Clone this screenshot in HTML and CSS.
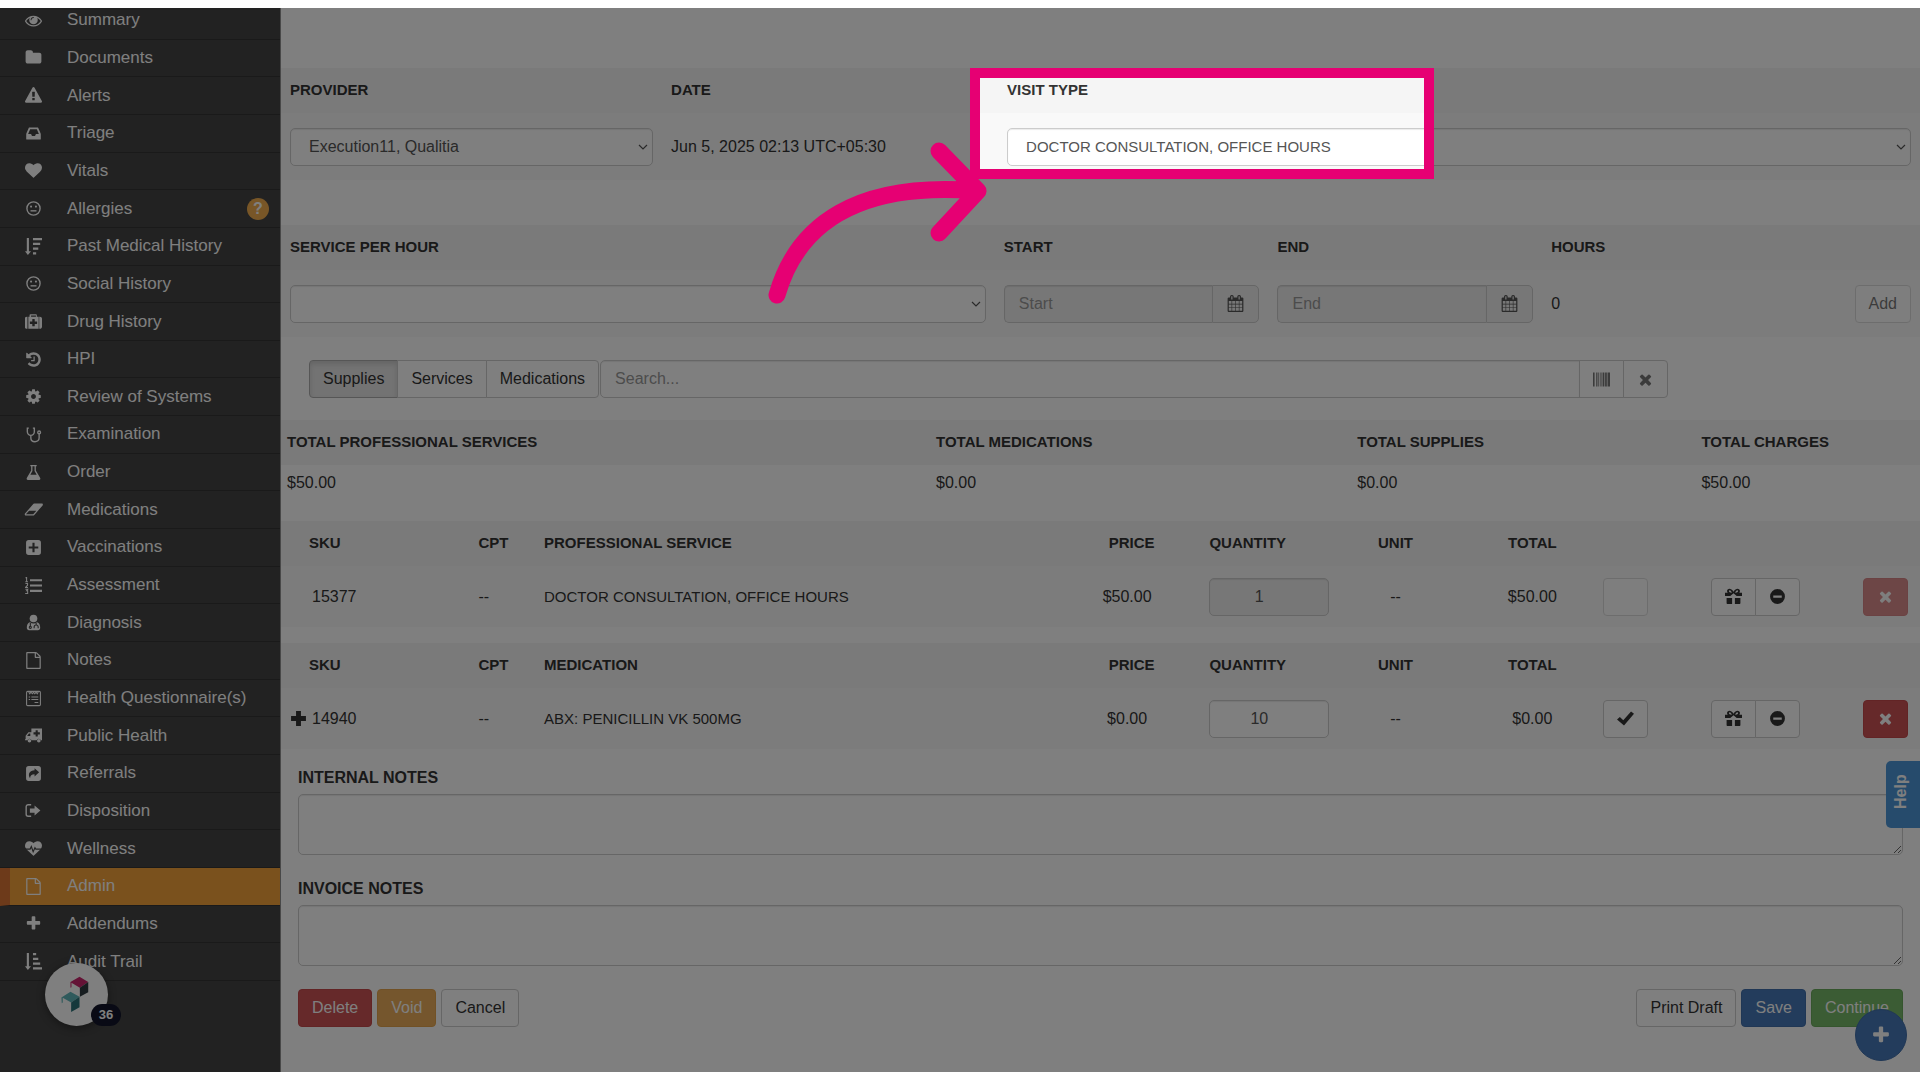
FILE: index.html
```html
<!DOCTYPE html>
<html lang="en">
<head>
	<meta charset="UTF-8">
	<title>Admin</title>
	<link rel="stylesheet" href="styles.css">
</head>
<body>
	<div class="app">
		<nav class="sidebar">
			<ul class="menu">
				<li><a href="#"><svg class="icon" viewBox="0 0 1792 1792"><path d="M1664 960q-152-236-381-353 61 104 61 225 0 185-131.500 316.500t-316.500 131.500-316.500-131.500-131.500-316.500q0-121 61-225-229 117-381 353 133 205 333.500 326.500t434.500 121.500 434.500-121.500 333.500-326.500zm-720-384q0-20-14-34t-34-14q-125 0-214.500 89.500t-89.500 214.500q0 20 14 34t34 14 34-14 14-34q0-86 61-147t147-61q20 0 34-14t14-34zm848 384q0 34-20 69-140 230-376.500 368.500t-499.500 138.500-499.500-139-376.500-368q-20-35-20-69t20-69q140-229 376.500-368t499.500-139 499.500 139 376.500 368q20 35 20 69z"/></svg>Summary</a></li>
				<li><a href="#"><svg class="icon" viewBox="0 0 1792 1792"><path d="M1728 608v704q0 92-66 158t-158 66h-1216q-92 0-158-66t-66-158v-960q0-92 66-158t158-66h320q92 0 158 66t66 158v32h672q92 0 158 66t66 158z"/></svg>Documents</a></li>
				<li><a href="#"><svg class="icon" viewBox="0 0 1792 1792"><path d="M1024 1375v-190q0-14-9.500-23.500t-22.500-9.500h-192q-13 0-22.500 9.500t-9.500 23.500v190q0 14 9.500 23.500t22.500 9.500h192q13 0 22.500-9.500t9.500-23.500zm-2-374l18-459q0-12-10-19-13-11-24-11h-220q-11 0-24 11-10 7-10 21l17 457q0 10 10 16.500t24 6.500h185q14 0 23.500-6.500t10.500-16.500zm-14-934l768 1408q35 63-2 126-17 29-46.500 46t-63.500 17h-1536q-34 0-63.500-17t-46.500-46q-37-63-2-126l768-1408q17-31 47-49t65-18 65 18 47 49z"/></svg>Alerts</a></li>
				<li><a href="#"><svg class="icon" viewBox="0 0 1792 1792"><path d="M1151 960h316q-1-3-2.500-8t-2.500-8l-212-496h-708l-212 496q-1 2-2.500 8t-2.500 8h316l95 192h320zm513 30v482q0 26-19 45t-45 19h-1408q-26 0-45-19t-19-45v-482q0-62 25-123l238-552q10-25 36.500-42t52.500-17h832q26 0 52.500 17t36.500 42l238 552q25 61 25 123z"/></svg>Triage</a></li>
				<li><a href="#"><svg class="icon" viewBox="0 0 1792 1792"><path d="M896 1664q-26 0-44-18l-624-602q-10-8-27.500-26t-55.500-65.500-68-97.500-53.500-121-23.500-138q0-220 127-344t351-124q62 0 126.500 21.500t120 58 95.500 68.500 76 68q36-36 76-68t95.500-68.500 120-58 126.500-21.500q224 0 351 124t127 344q0 221-229 450l-623 600q-18 18-44 18z"/></svg>Vitals</a></li>
				<li><a href="#"><svg class="icon" viewBox="0 0 16 16"><circle class="line" cx="8" cy="8" r="6.200"/><circle cx="5.700" cy="6.200" r="1"/><circle cx="10.300" cy="6.200" r="1"/><path class="line" d="M5.200 10.200h5.600"/></svg>Allergies<span class="badge">?</span></a></li>
				<li><a href="#"><svg class="icon" viewBox="0 0 16 16"><path d="M1.700 0h2v12.500h2L2.700 16 0 12.500h1.700zM7.500 0h8.500v2h-8.500zM7.500 4.500h6.800v2h-6.800zM7.500 9h5v2h-5zM7.500 13.500h3v2h-3z"/></svg>Past Medical History</a></li>
				<li><a href="#"><svg class="icon" viewBox="0 0 16 16"><circle class="line" cx="8" cy="8" r="6.200"/><circle cx="5.700" cy="6.200" r="1"/><circle cx="10.300" cy="6.200" r="1"/><path class="line" d="M5.200 10.200h5.600"/></svg>Social History</a></li>
				<li><a href="#"><svg class="icon" viewBox="0 0 1792 1792"><path d="M1280 1120v-192q0-14-9-23t-23-9h-224v-224q0-14-9-23t-23-9h-192q-14 0-23 9t-9 23v224h-224q-14 0-23 9t-9 23v192q0 14 9 23t23 9h224v224q0 14 9 23t23 9h192q14 0 23-9t9-23v-224h224q14 0 23-9t9-23zm-640-736h512v-128h-512v128zm-384 0v1280h-64q-92 0-158-66t-66-158v-832q0-92 66-158t158-66h64zm1184 0v1280h-1088v-1280h128v-160q0-40 28-68t68-28h576q40 0 68 28t28 68v160h128zm352 224v832q0 92-66 158t-158 66h-64v-1280h64q92 0 158 66t66 158z"/></svg>Drug History</a></li>
				<li><a href="#"><svg class="icon" viewBox="0 0 1792 1792"><path d="M1664 896q0 156-61 298t-164 245-245 164-298 61q-172 0-327-72.500t-264-204.500q-7-10-6.500-22.500t8.500-20.500l137-138q10-9 25-9 16 2 23 12 73 95 179 147t225 52q104 0 198.500-40.500t163.500-109.500 109.500-163.500 40.500-198.500-40.500-198.500-109.500-163.500-163.500-109.500-198.500-40.500q-98 0-188 35.500t-160 101.500l137 138q31 30 14 69-17 40-59 40h-448q-26 0-45-19t-19-45v-448q0-42 40-59 39-17 69 14l130 129q107-101 244.500-156.500t284.500-55.500q156 0 298 61t245 164 164 245 61 298zm-640-288v448q0 14-9 23t-23 9h-320q-14 0-23-9t-9-23v-64q0-14 9-23t23-9h224v-352q0-14 9-23t23-9h64q14 0 23 9t9 23z"/></svg>HPI</a></li>
				<li><a href="#"><svg class="icon" viewBox="0 0 1792 1792"><path d="M1152 896q0-106-75-181t-181-75-181 75-75 181 75 181 181 75 181-75 75-181zm512-109v222q0 12-8 23t-20 13l-185 28q-19 54-39 91 35 50 107 138 10 12 10 25t-9 23q-27 37-99 108t-94 71q-12 0-26-9l-138-108q-44 23-91 38-16 136-29 186-7 28-36 28h-222q-14 0-24.500-8.500t-11.500-21.500l-28-184q-49-16-90-37l-141 107q-10 9-25 9-14 0-25-11-126-114-165-168-7-10-7-23 0-12 8-23 15-21 51-66.500t54-70.500q-27-50-41-99l-183-27q-13-2-21-12.500t-8-23.500v-222q0-12 8-23t19-13l186-28q14-46 39-92-40-57-107-138-10-12-10-24 0-10 9-23 26-36 98.500-107.500t94.500-71.500q13 0 26 10l138 107q44-23 91-38 16-136 29-186 7-28 36-28h222q14 0 24.500 8.500t11.500 21.500l28 184q49 16 90 37l142-107q9-9 24-9 13 0 25 10 129 119 165 170 7 8 7 22 0 12-8 23-15 21-51 66.500t-54 70.500q26 50 41 98l183 28q13 2 21 12.500t8 23.500z"/></svg>Review of Systems</a></li>
				<li><a href="#"><svg class="icon" viewBox="0 0 16 16"><path class="line" d="M3.600 2H2.200v3.500a3.300 3.300 0 0 0 6.600 0V2H7.400M5.500 9v2.300c0 4.700 7.800 4.700 7.800 0V7.500"/><circle class="line" cx="13.300" cy="6" r="1.300"/></svg>Examination</a></li>
				<li><a href="#"><svg class="icon" viewBox="0 0 16 16"><path fill-rule="evenodd" d="M5 1h6v1.200h-.8v4l4 6.800c.6 1 .2 2-1 2H2.800c-1.200 0-1.600-1-1-2l4-6.800v-4H5zM7 2.200v4.300L5 10h6L9 6.500V2.200z"/></svg>Order</a></li>
				<li><a href="#"><svg class="icon icon-wide" viewBox="0 0 1984 1792"><path d="M960 1408l336-384h-768l-336 384h768zm1013-1077q15 34 9.500 71.500t-30.500 65.500l-896 1024q-38 44-96 44h-768q-38 0-69.500-20.500t-47.500-54.500q-15-34-9.500-71.500t30.500-65.500l896-1024q38-44 96-44h768q38 0 69.500 20.500t47.500 54.500z"/></svg>Medications</a></li>
				<li><a href="#"><svg class="icon" viewBox="0 0 16 16"><path fill-rule="evenodd" d="M3.500 1h9a2.500 2.500 0 0 1 2.500 2.500v9a2.500 2.500 0 0 1-2.500 2.500h-9A2.500 2.500 0 0 1 1 12.500v-9A2.500 2.500 0 0 1 3.500 1zM7 3.500V7H3.500v2H7v3.500h2V9h3.500V7H9V3.500z"/></svg>Vaccinations</a></li>
				<li><a href="#"><svg class="icon" viewBox="0 0 16 16"><path d="M4.700 2H16v2H4.700zM4.700 7H16v2H4.700zM4.700 12H16v2H4.700z"/><path class="thin" d="M.5 1l1-.6v4M.3 4.500h2.500M.4 6.200h2v1.500L.6 9.800h2.200M.4 11.500h2.200L1.500 13h1v2.500H.2"/></svg>Assessment</a></li>
				<li><a href="#"><svg class="icon" viewBox="0 0 16 16"><circle cx="8" cy="4.200" r="3.600"/><path d="M4.600 7.800C2.500 8.500 1.700 10.500 1.700 13c0 1.500.8 2.400 2.200 2.400h8.200c1.400 0 2.200-.9 2.200-2.400 0-2.500-.8-4.500-2.900-5.200-2 1.500-4.800 1.500-6.800 0z"/><path class="cut" d="M5 8.500v3M10.500 8.500v2M8.600 13.500v-1.300a1.900 1.900 0 0 1 3.800 0v1.300"/><circle class="cut" cx="5" cy="12.500" r="1"/></svg>Diagnosis</a></li>
				<li><a href="#"><svg class="icon" viewBox="0 0 1792 1792"><path d="M1596 380q28 28 48 76t20 88v1152q0 40-28 68t-68 28h-1344q-40 0-68-28t-28-68v-1600q0-40 28-68t68-28h896q40 0 88 20t76 48zm-444-244v376h376q-10-29-22-41l-313-313q-12-12-41-22zm384 1528v-1024h-416q-40 0-68-28t-28-68v-416h-768v1536h1280z"/></svg>Notes</a></li>
				<li><a href="#"><svg class="icon" viewBox="0 0 16 16"><rect class="thin" x="1.500" y="1.300" width="13" height="13.400" rx="1"/><path class="thin" d="M3.500 2l1 1.500L5.500 2 7 3.500 8 2l1.200 1.500L10.500 2l1 1.500 1-1.500M3.500 6.500h1.300M6 6.500h6.500M3.500 9h1.300M6 9h6.500M9 11.800h3.500"/></svg>Health Questionnaire(s)</a></li>
				<li><a href="#"><svg class="icon" viewBox="0 0 16 16"><path fill-rule="evenodd" d="M6 1.500h10V12.500h-1.100a2 2 0 0 0-3.900 0H6.200a2 2 0 0 0-3.900 0H0v-1h.6V8.300L3.200 5H6zM3.700 6.200L2 8.400h3V6.200zM10 3v2H8v2h2v2h2V7h2V5h-2V3z"/><circle cx="4.200" cy="12.900" r="1.700"/><circle cx="13" cy="12.900" r="1.700"/></svg>Public Health</a></li>
				<li><a href="#"><svg class="icon" viewBox="0 0 16 16"><path fill-rule="evenodd" d="M3.500 1h9a2.500 2.500 0 0 1 2.500 2.500v9a2.500 2.500 0 0 1-2.500 2.500h-9A2.500 2.500 0 0 1 1 12.500v-9A2.500 2.500 0 0 1 3.500 1zM9 3v2C4.500 5 2.200 8.500 4.800 12.500 4.800 10 6.300 8.700 9 8.700v2.200l4.300-4z"/></svg>Referrals</a></li>
				<li><a href="#"><svg class="icon" viewBox="0 0 16 16"><path class="line" d="M5.800 2.600H3a1.900 1.900 0 0 0-1.900 1.900v7A1.900 1.900 0 0 0 3 13.400h2.800"/><path d="M9 3.200l5.500 4.800L9 12.800V10H4.600V6H9z"/></svg>Disposition</a></li>
				<li><a href="#"><svg class="icon" viewBox="0 0 1792 1792"><path d="M896 1664q-26 0-44-18l-624-602q-10-8-27.500-26t-55.500-65.500-68-97.500-53.500-121-23.500-138q0-220 127-344t351-124q62 0 126.500 21.500t120 58 95.500 68.500 76 68q36-36 76-68t95.500-68.500 120-58 126.500-21.500q224 0 351 124t127 344q0 221-229 450l-623 600q-18 18-44 18z"/><path class="pulse" d="M60 960h480l130-280 190 560 190-420 90 140h590"/></svg>Wellness</a></li>
				<li class="active"><a href="#"><svg class="icon" viewBox="0 0 1792 1792"><path d="M1596 380q28 28 48 76t20 88v1152q0 40-28 68t-68 28h-1344q-40 0-68-28t-28-68v-1600q0-40 28-68t68-28h896q40 0 88 20t76 48zm-444-244v376h376q-10-29-22-41l-313-313q-12-12-41-22zm384 1528v-1024h-416q-40 0-68-28t-28-68v-416h-768v1536h1280z"/></svg>Admin</a></li>
				<li><a href="#"><svg class="icon" viewBox="0 0 1792 1792"><path d="M1600 736v192q0 40-28 68t-68 28h-416v416q0 40-28 68t-68 28h-192q-40 0-68-28t-28-68v-416h-416q-40 0-68-28t-28-68v-192q0-40 28-68t68-28h416v-416q0-40 28-68t68-28h192q40 0 68 28t28 68v416h416q40 0 68 28t28 68z"/></svg>Addendums</a></li>
				<li><a href="#"><svg class="icon" viewBox="0 0 16 16"><path d="M1.700 0h2v12.500h2L2.700 16 0 12.500h1.700zM7.500 0h3v2h-3zM7.500 4.500h5v2h-5zM7.500 9h6.800v2h-6.800zM7.500 13.500h8.500v2h-8.500z"/></svg>Audit Trail</a></li>
			</ul>
		</nav>

		<main class="content">
			<table class="grid visit">
				<colgroup><col class="w-provider"><col class="w-date"><col></colgroup>
				<thead>
					<tr><th>PROVIDER</th><th>DATE</th><th>VISIT TYPE</th></tr>
				</thead>
				<tbody>
					<tr>
						<td><select class="field" aria-label="Provider"><option>Execution11, Qualitia</option></select></td>
						<td>Jun 5, 2025 02:13 UTC+05:30</td>
						<td><select class="field caps" aria-label="Visit type"><option>DOCTOR CONSULTATION, OFFICE HOURS</option></select></td>
					</tr>
				</tbody>
			</table>

			<table class="grid hourly">
				<colgroup><col class="w-service"><col class="w-time"><col class="w-time"><col><col></colgroup>
				<thead>
					<tr><th>SERVICE PER HOUR</th><th>START</th><th>END</th><th>HOURS</th><th></th></tr>
				</thead>
				<tbody>
					<tr>
						<td><select class="field" aria-label="Service per hour"><option></option></select></td>
						<td>
							<div class="date-group">
								<input type="text" class="field" placeholder="Start" aria-label="Start" disabled>
								<span class="addon"><svg class="icon" viewBox="0 0 1792 1792"><path d="M192 1664h288v-288h-288v288zm352 0h320v-288h-320v288zm-352-352h288v-320h-288v320zm352 0h320v-320h-320v320zm-352-384h288v-288h-288v288zm736 736h320v-288h-320v288zm-384-736h320v-288h-320v288zm768 736h288v-288h-288v288zm-384-352h320v-320h-320v320zm-352-864v-288q0-13-9.500-22.500t-22.500-9.500h-64q-13 0-22.500 9.500t-9.500 22.500v288q0 13 9.500 22.500t22.500 9.500h64q13 0 22.500-9.500t9.500-22.500zm736 864h288v-320h-288v320zm-384-384h320v-288h-320v288zm384 0h288v-288h-288v288zm32-480v-288q0-13-9.500-22.500t-22.500-9.500h-64q-13 0-22.500 9.500t-9.500 22.500v288q0 13 9.500 22.500t22.500 9.500h64q13 0 22.500-9.500t9.500-22.500zm384-64v1280q0 52-38 90t-90 38h-1408q-52 0-90-38t-38-90v-1280q0-52 38-90t90-38h128v-96q0-66 47-113t113-47h64q66 0 113 47t47 113v96h384v-96q0-66 47-113t113-47h64q66 0 113 47t47 113v96h128q52 0 90 38t38 90z"/></svg></span>
							</div>
						</td>
						<td>
							<div class="date-group">
								<input type="text" class="field" placeholder="End" aria-label="End" disabled>
								<span class="addon"><svg class="icon" viewBox="0 0 1792 1792"><path d="M192 1664h288v-288h-288v288zm352 0h320v-288h-320v288zm-352-352h288v-320h-288v320zm352 0h320v-320h-320v320zm-352-384h288v-288h-288v288zm736 736h320v-288h-320v288zm-384-736h320v-288h-320v288zm768 736h288v-288h-288v288zm-384-352h320v-320h-320v320zm-352-864v-288q0-13-9.500-22.500t-22.500-9.500h-64q-13 0-22.500 9.500t-9.500 22.500v288q0 13 9.500 22.500t22.500 9.500h64q13 0 22.500-9.500t9.500-22.500zm736 864h288v-320h-288v320zm-384-384h320v-288h-320v288zm384 0h288v-288h-288v288zm32-480v-288q0-13-9.500-22.500t-22.500-9.500h-64q-13 0-22.500 9.500t-9.500 22.500v288q0 13 9.500 22.500t22.500 9.500h64q13 0 22.500-9.500t9.500-22.500zm384-64v1280q0 52-38 90t-90 38h-1408q-52 0-90-38t-38-90v-1280q0-52 38-90t90-38h128v-96q0-66 47-113t113-47h64q66 0 113 47t47 113v96h384v-96q0-66 47-113t113-47h64q66 0 113 47t47 113v96h128q52 0 90 38t38 90z"/></svg></span>
							</div>
						</td>
						<td>0</td>
						<td class="right"><button type="button" class="btn" disabled>Add</button></td>
					</tr>
				</tbody>
			</table>

			<form class="search">
				<div class="btn-group">
					<button type="button" class="btn pressed">Supplies</button>
					<button type="button" class="btn">Services</button>
					<button type="button" class="btn">Medications</button>
				</div>
				<input type="text" class="field" placeholder="Search..." aria-label="Search">
				<button type="button" class="btn square dim" aria-label="Scan barcode"><svg class="icon" viewBox="0 0 16 16"><path d="M0 1.500h1.500v13H0zM3 1.500h1.200v13H3zM5 1.500h.8v13H5zM7 1.500h1v13H7zM9 1.500h1.700v13H9zM11.400 1.500h1.600v13h-1.600zM13.700 1.500H16v13h-2.300z"/></svg></button>
				<button type="button" class="btn square dim" aria-label="Clear search"><svg class="icon" viewBox="0 0 1792 1792"><path d="M1490 1322q0 40-28 68l-136 136q-28 28-68 28t-68-28l-294-294-294 294q-28 28-68 28t-68-28l-136-136q-28-28-28-68t28-68l294-294-294-294q-28-28-28-68t28-68l136-136q28-28 68-28t68 28l294 294 294-294q28-28 68-28t68 28l136 136q28 28 28 68t-28 68l-294 294 294 294q28 28 28 68z"/></svg></button>
			</form>

			<table class="grid totals">
				<colgroup><col class="w-t1"><col class="w-t2"><col class="w-t3"><col></colgroup>
				<thead>
					<tr><th>TOTAL PROFESSIONAL SERVICES</th><th>TOTAL MEDICATIONS</th><th>TOTAL SUPPLIES</th><th>TOTAL CHARGES</th></tr>
				</thead>
				<tbody>
					<tr><td>$50.00</td><td>$0.00</td><td>$0.00</td><td>$50.00</td></tr>
				</tbody>
			</table>

			<table class="grid items">
				<colgroup><col class="w-sku"><col class="w-cpt"><col class="w-name"><col class="w-price"><col class="w-price"><col class="w-unit"><col class="w-total"><col class="w-check"><col class="w-actions"><col></colgroup>
				<thead>
					<tr><th class="sku">SKU</th><th>CPT</th><th>PROFESSIONAL SERVICE</th><th class="center">PRICE</th><th>QUANTITY</th><th class="unit">UNIT</th><th class="center">TOTAL</th><th></th><th></th><th></th></tr>
				</thead>
				<tbody>
					<tr>
						<td><span class="sku-cell"><span class="expand"></span>15377</span></td>
						<td>--</td>
						<td class="caps">DOCTOR CONSULTATION, OFFICE HOURS</td>
						<td class="center price">$50.00</td>
						<td><input type="text" class="field qty" value="1" aria-label="Quantity" disabled></td>
						<td class="unit">--</td>
						<td class="center">$50.00</td>
						<td><button type="button" class="btn square" aria-label="Dispense" disabled></button></td>
						<td>
							<div class="btn-group">
								<button type="button" class="btn square" aria-label="Gift"><svg class="icon" viewBox="0 0 16 16"><path fill-rule="evenodd" d="M2.500 1.500C4 .2 6 .6 8 3.500 10 .6 12 .2 13.500 1.500c1 1 .5 2.500 0 3H16v3h-5L8 5 5 7.500H0v-3h2.500c-.5-.5-1-2 0-3zM4 2.300c-.8.8 0 2 2.500 2.200C5.800 2.600 4.800 1.800 4 2.300zm8 0c-.8-.5-1.800.3-2.500 2.200 2.500-.2 3.300-1.400 2.500-2.200zM1.500 9.500h5.200V15H2.500c-.6 0-1-.4-1-1zM9.300 9.500h5.200V14c0 .6-.4 1-1 1H9.300z"/></svg></button>
								<button type="button" class="btn square" aria-label="Exclude"><svg class="icon" viewBox="0 0 16 16"><path fill-rule="evenodd" d="M8 1a7 7 0 1 1 0 14A7 7 0 0 1 8 1zM4 7v2.200h8V7z"/></svg></button>
							</div>
						</td>
						<td><button type="button" class="btn square red" aria-label="Remove" disabled><svg class="icon" viewBox="0 0 1792 1792"><path d="M1490 1322q0 40-28 68l-136 136q-28 28-68 28t-68-28l-294-294-294 294q-28 28-68 28t-68-28l-136-136q-28-28-28-68t28-68l294-294-294-294q-28-28-28-68t28-68l136-136q28-28 68-28t68 28l294 294 294-294q28-28 68-28t68 28l136 136q28 28 28 68t-28 68l-294 294 294 294q28 28 28 68z"/></svg></button></td>
					</tr>
				</tbody>
			</table>

			<table class="grid items">
				<colgroup><col class="w-sku"><col class="w-cpt"><col class="w-name"><col class="w-price"><col class="w-price"><col class="w-unit"><col class="w-total"><col class="w-check"><col class="w-actions"><col></colgroup>
				<thead>
					<tr><th class="sku">SKU</th><th>CPT</th><th>MEDICATION</th><th class="center">PRICE</th><th>QUANTITY</th><th class="unit">UNIT</th><th class="center">TOTAL</th><th></th><th></th><th></th></tr>
				</thead>
				<tbody>
					<tr>
						<td><span class="sku-cell"><button type="button" class="expand" aria-label="Expand"><svg class="icon" viewBox="0 0 16 16"><path d="M5.700 1h4.600v4.700H15v4.600h-4.700V15H5.700v-4.700H1V5.700h4.700z"/></svg></button>14940</span></td>
						<td>--</td>
						<td class="caps">ABX: PENICILLIN VK 500MG</td>
						<td class="center price">$0.00</td>
						<td><input type="text" class="field qty" value="10" aria-label="Quantity"></td>
						<td class="unit">--</td>
						<td class="center">$0.00</td>
						<td><button type="button" class="btn square" aria-label="Dispense"><svg class="icon" viewBox="0 0 16 16"><path d="M0 9l2.700-2.300 3.200 3L13.200 1.500 16 3.600 6.600 14.500z"/></svg></button></td>
						<td>
							<div class="btn-group">
								<button type="button" class="btn square" aria-label="Gift"><svg class="icon" viewBox="0 0 16 16"><path fill-rule="evenodd" d="M2.500 1.500C4 .2 6 .6 8 3.500 10 .6 12 .2 13.500 1.500c1 1 .5 2.500 0 3H16v3h-5L8 5 5 7.500H0v-3h2.500c-.5-.5-1-2 0-3zM4 2.300c-.8.8 0 2 2.500 2.200C5.800 2.600 4.800 1.800 4 2.300zm8 0c-.8-.5-1.800.3-2.500 2.200 2.500-.2 3.300-1.400 2.500-2.200zM1.500 9.500h5.200V15H2.500c-.6 0-1-.4-1-1zM9.300 9.500h5.200V14c0 .6-.4 1-1 1H9.300z"/></svg></button>
								<button type="button" class="btn square" aria-label="Exclude"><svg class="icon" viewBox="0 0 16 16"><path fill-rule="evenodd" d="M8 1a7 7 0 1 1 0 14A7 7 0 0 1 8 1zM4 7v2.200h8V7z"/></svg></button>
							</div>
						</td>
						<td><button type="button" class="btn square red" aria-label="Remove"><svg class="icon" viewBox="0 0 1792 1792"><path d="M1490 1322q0 40-28 68l-136 136q-28 28-68 28t-68-28l-294-294-294 294q-28 28-68 28t-68-28l-136-136q-28-28-28-68t28-68l294-294-294-294q-28-28-28-68t28-68l136-136q28-28 68-28t68 28l294 294 294-294q28-28 68-28t68 28l136 136q28 28 28 68t-28 68l-294 294 294 294q28 28 28 68z"/></svg></button></td>
					</tr>
				</tbody>
			</table>

			<form class="notes">
				<label for="internal_notes">INTERNAL NOTES</label>
				<textarea id="internal_notes" class="field"></textarea>
				<label for="invoice_notes">INVOICE NOTES</label>
				<textarea id="invoice_notes" class="field"></textarea>
				<div class="actions">
					<button type="button" class="btn red">Delete</button>
					<button type="button" class="btn orange">Void</button>
					<button type="button" class="btn">Cancel</button>
					<button type="button" class="btn push">Print Draft</button>
					<button type="button" class="btn blue">Save</button>
					<button type="button" class="btn green">Continue</button>
				</div>
			</form>
		</main>

		<button type="button" class="help">Help</button>
		<button type="button" class="fab" aria-label="New"><svg class="icon" viewBox="0 0 1792 1792"><path d="M1600 736v192q0 40-28 68t-68 28h-416v416q0 40-28 68t-68 28h-192q-40 0-68-28t-28-68v-416h-416q-40 0-68-28t-28-68v-192q0-40 28-68t68-28h416v-416q0-40 28-68t68-28h192q40 0 68 28t28 68v416h416q40 0 68 28t28 68z"/></svg></button>
		<div class="launcher">
			<svg viewBox="135 462 188 188">
				<path fill="#c9266c" d="M211 519l27-16 26 16-25 17-25-15v13l-3 2z"/>
				<path fill="#2e3a40" d="M264 519v30l-25 14v-27z"/>
				<path fill="#5fb4b8" d="M184 565l27-17 27 15-25 17-25-14v14l-3 2z"/>
				<path fill="#2b7278" d="M238 563v31l-25 14v-28z"/>
			</svg>
			<span class="count">36</span>
		</div>

		<!-- tour step: dims everything outside the box -->
		<div class="spotlight"></div>
		<svg class="pointer" viewBox="760 130 240 180"><path d="M777 295C797 225 857 181 978 191M939 151l39 40-39 42"/></svg>
	</div>
</body>
</html>
```
FILE: styles.css
```css
*{
	box-sizing: border-box;
}
body{
	margin: 0;
	padding: 8px 0;
	background-color: #fff;
	color: #333;
	font-family: "Liberation Sans", Arial, sans-serif;
	font-size: 16px;
	line-height: 22px;
}
button, input, select, textarea{
	font: inherit;
	color: inherit;
}
.app{
	position: relative;
	display: flex;
	min-height: calc(100vh - 16px);
	overflow: hidden;
}
.icon{
	width: 17px;
	height: 17px;
	flex: none;
	fill: currentColor;
}
.icon-wide{
	width: 19px;
}
.icon .line, .icon .thin, .icon .cut, .icon .pulse{
	fill: none;
	stroke: currentColor;
	stroke-width: 1.3;
}
.icon .thin{
	stroke-width: 1;
}
.icon .cut{
	stroke: #444;
	stroke-width: 1;
}
.icon .pulse{
	stroke: #444;
	stroke-width: 120;
}

/* sidebar */
.sidebar{
	display: flex;
	flex-direction: column;
	width: 281px;
	flex: none;
	background-color: #444;
	border-right: 1px solid #909090;
}
.menu{
	display: grid;
	grid-auto-rows: 1fr;
	flex: 0 0 92%;
	margin: -6px 0 0;
	padding: 0;
	list-style: none;
	font-size: 17px;
}
.menu li{
	display: flex;
	border-bottom: 1px solid #343434;
}
.menu a{
	display: flex;
	flex: 1;
	align-items: center;
	gap: 25px;
	padding: 0 11px 0 25px;
	color: #fff;
	text-decoration: none;
}
.menu .icon-wide{
	margin: 0 -1px;
}
.menu .active{
	background-color: #f4a23a;
	border-left: 10px solid #da7434;
}
.menu .active a{
	padding-left: 15px;
}
.badge{
	width: 22px;
	height: 22px;
	margin-left: auto;
	border-radius: 50%;
	background-color: #f0ad4e;
	font-size: 16px;
	font-weight: bold;
	text-align: center;
}

/* content */
.content{
	flex: 1;
	min-width: 0;
	padding-top: 60px;
}
.grid{
	width: 100%;
	table-layout: fixed;
	border-collapse: collapse;
}
.grid th{
	height: 45px;
	padding: 0 9px 2px;
	background-color: #f5f5f5;
	font-size: 15px;
	text-align: left;
}
.grid td{
	height: 67px;
	padding: 0 9px;
	background-color: #f9f9f9;
}
.grid .right{
	text-align: right;
}
.grid .center{
	text-align: center;
}
.grid .price{
	padding-right: 18px;
}
.grid .unit{
	padding-right: 27px;
	text-align: center;
}
.grid .sku{
	padding-left: 28px;
}
.caps{
	font-size: 15px;
}
.visit{
	margin-bottom: 45px;
}
.w-provider{ width: 23.25%; }
.w-date{ width: 20.5%; }
.w-service{ width: 43.55%; }
.w-time{ width: 16.7%; }
.w-t1{ width: 39.6%; }
.w-t2{ width: 25.7%; }
.w-t3{ width: 21%; }
.w-sku{ width: 11.5%; }
.w-cpt{ width: 4%; }
.w-name{ width: 32.2%; }
.w-price{ width: 8.4%; }
.w-unit{ width: 8.1%; }
.w-total{ width: 7.5%; }
.w-check{ width: 6.6%; }
.w-actions{ width: 9.3%; }

.totals{
	margin: 22px 0 21px;
}
.totals th{
	padding: 0 6px 2px;
}
.totals td{
	height: 35px;
	padding: 0 6px;
	background-color: transparent;
}
.items{
	margin-bottom: 16px;
}
.items td{
	height: 61px;
}
.sku-cell{
	display: flex;
	align-items: center;
	gap: 5px;
}
.expand{
	display: flex;
	width: 17px;
	padding: 0;
	border: 0;
	background: none;
}

/* controls */
.field{
	display: block;
	width: 100%;
	height: 38px;
	padding: 0 14px;
	border: 1px solid #ccc;
	border-radius: 5px;
	background-color: #fff;
	color: #555;
	box-shadow: inset 0 1px 1px rgba(0, 0, 0, .08);
}
select.field{
	padding: 0 18px;
	appearance: none;
	background-image: url("data:image/svg+xml,%3Csvg xmlns='http://www.w3.org/2000/svg' width='10' height='6'%3E%3Cpath d='M1 1l4 4 4-4' fill='none' stroke='%23555' stroke-width='1.2'/%3E%3C/svg%3E");
	background-repeat: no-repeat;
	background-position: right 4px center;
}
select.field.caps{
	font-size: 15px;
}
.field::placeholder{
	color: #999;
}
.field:disabled{
	background-color: #eee;
}
.qty{
	padding: 0 34px 0 14px;
	text-align: center;
}
.date-group{
	display: flex;
}
.date-group .field{
	border-right: 0;
	border-radius: 5px 0 0 5px;
}
.addon{
	display: flex;
	flex: none;
	align-items: center;
	justify-content: center;
	width: 47px;
	border: 1px solid #ccc;
	border-radius: 0 5px 5px 0;
	background-color: #eee;
	color: #555;
}
.btn{
	display: inline-flex;
	align-items: center;
	justify-content: center;
	height: 38px;
	padding: 0 13px;
	border: 1px solid #ccc;
	border-radius: 4px;
	background-color: #fff;
	vertical-align: middle;
}
.btn:disabled{
	opacity: .65;
}
.btn.square{
	width: 45px;
	padding: 0;
}
.btn.dim{
	color: #777;
}
.btn.red{
	background-color: #cc5254;
	border-color: #c4484a;
	color: #fff;
}
.btn.orange{
	background-color: #eaad5a;
	border-color: #e3a34c;
	color: #fff;
}
.btn.blue{
	background-color: #4678b8;
	border-color: #416fab;
	color: #fff;
}
.btn.green{
	background-color: #76b868;
	border-color: #6aab5c;
	color: #fff;
}
.btn.pressed{
	background-color: #e6e6e6;
	border-color: #adadad;
	box-shadow: inset 0 3px 5px rgba(0, 0, 0, .125);
}
.btn-group{
	display: flex;
}
.btn-group .btn + .btn{
	margin-left: -1px;
}
.btn-group .btn:not(:first-child){
	border-top-left-radius: 0;
	border-bottom-left-radius: 0;
}
.btn-group .btn:not(:last-child){
	border-top-right-radius: 0;
	border-bottom-right-radius: 0;
}
.search{
	display: flex;
	width: 82.9%;
	margin: 23px 0 0 28px;
}
.search .field{
	flex: 1;
	margin-left: 1px;
	border-radius: 5px 0 0 5px;
}
.search > .btn{
	margin-left: -1px;
	border-radius: 0;
}
.search > .btn:last-child{
	border-radius: 0 4px 4px 0;
}

/* notes */
.notes{
	padding: 2px 17px 0;
}
.notes label{
	display: block;
	margin-bottom: 5px;
	font-weight: bold;
}
.notes textarea{
	height: 61px;
	margin-bottom: 23px;
}
.actions{
	display: flex;
	gap: 5px;
}
.push{
	margin-left: auto;
}

/* floating things */
.help{
	position: absolute;
	top: 753px;
	right: 0;
	width: 34px;
	height: 67px;
	padding: 6px 0 0 4px;
	border: 0;
	border-radius: 0 5px 5px 0;
	background-color: #4c96d8;
	color: #fff;
	font-weight: bold;
	writing-mode: vertical-rl;
	transform: rotate(180deg);
}
.fab{
	position: absolute;
	right: 13px;
	bottom: 11px;
	display: flex;
	align-items: center;
	justify-content: center;
	width: 52px;
	height: 52px;
	border: 1px solid #416fab;
	border-radius: 50%;
	background-color: #4678b8;
	color: #fff;
}
.fab .icon{
	width: 20px;
	height: 20px;
}
.launcher{
	position: absolute;
	left: 45px;
	bottom: 46px;
	width: 63px;
	height: 63px;
	border-radius: 50%;
	background-color: #fff;
	box-shadow: 0 2px 8px rgba(0, 0, 0, .4);
}
.count{
	position: absolute;
	right: -13px;
	bottom: 0;
	width: 30px;
	border-radius: 11px;
	background-color: #12152a;
	color: #fff;
	font-size: 13px;
	font-weight: bold;
	text-align: center;
}
.spotlight{
	position: absolute;
	top: 60px;
	left: 970px;
	width: 464px;
	height: 111px;
	border: 10px solid #e60073;
	box-shadow: 0 0 0 2000px rgba(0, 0, 0, .5);
	pointer-events: none;
}
.pointer{
	position: absolute;
	top: 122px;
	left: 760px;
	width: 240px;
	height: 180px;
	fill: none;
	stroke: #e60073;
	stroke-width: 17;
	stroke-linecap: round;
	stroke-linejoin: round;
	pointer-events: none;
}
```
